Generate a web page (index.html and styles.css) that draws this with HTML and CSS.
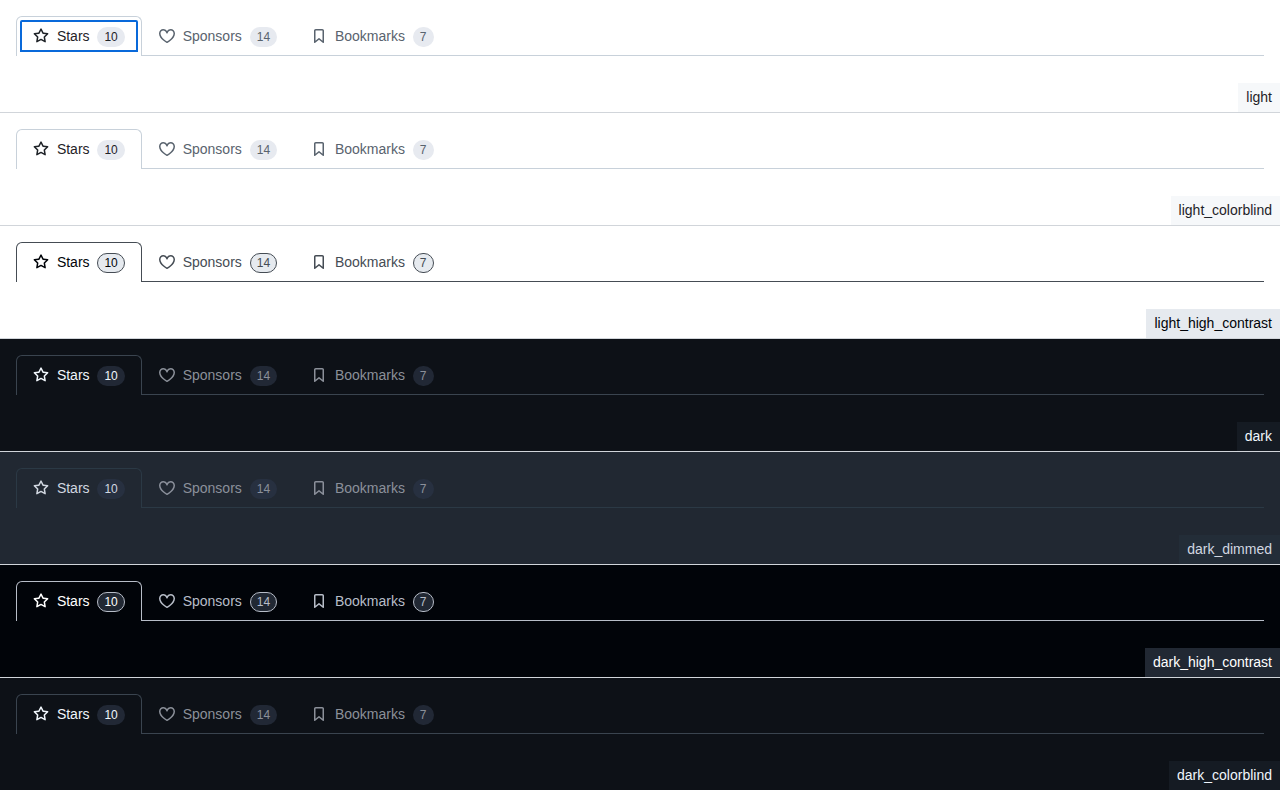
FILE: index.html
```html
<!DOCTYPE html>
<html lang="en">
<head>
<meta charset="utf-8">
<title>TabNav themes</title>
<link rel="stylesheet" href="styles.css">
</head>
<body>
<script src="script.js"></script>
</body>
</html>
```

FILE: styles.css
```css
* { box-sizing: border-box; }
body {
  margin: 0;
  font-family: "Liberation Sans", Arial, sans-serif;
  font-size: 14px;
  line-height: 21px;
  height: 790px;
  overflow: hidden;
}
.theme {
  --counter-border: transparent;
  display: flex;
  flex-direction: column;
  justify-content: space-between;
  height: 113px;
  padding-top: 16px;
  border-bottom: 1px solid #d1d5da;
  background: var(--bg);
  color: var(--fg);
}
.tabnav {
  height: 40px;
  margin: 0 16px;
  border-bottom: 1px solid var(--border);
}
.tabs { display: flex; height: 40px; }
.tab {
  display: flex;
  align-items: center;
  height: 40px;
  padding: 0 16px;
  border: 1px solid transparent;
  border-bottom: 0;
  color: var(--muted);
  line-height: 23px;
}
.tab.selected {
  color: var(--fg);
  background: var(--bg);
  border-color: var(--border);
  border-radius: 6px 6px 0 0;
}
.tab.focused { outline: 2px solid #0969da; outline-offset: -6px; }
.icon { fill: currentColor; margin: 0 7.89px 1px 0; }
.counter {
  height: 20px;
  margin: 1px 0 0 7.89px;
  padding: 0 6px;
  border: 1px solid var(--counter-border);
  border-radius: 24px;
  background: var(--counter);
  font-size: 12px;
  line-height: 18px;
}
.name {
  align-self: flex-end;
  height: 29px;
  padding: 4px 8px;
  background: var(--label);
}
.light { --bg: #fff; --fg: #1f2328; --muted: #59636e; --border: #c8d1da; --counter: #e7eaf0; --label: #f6f8fa; }
.light_high_contrast { --bg: #fff; --fg: #010409; --muted: #454c54; --border: #454c54; --counter: #e6eaef; --counter-border: #454c54; --label: #e6eaef; }
.dark { --bg: #0d1117; --fg: #f0f6fc; --muted: #8b9099; --border: #3a444f; --counter: #212835; --label: #151b23; }
.dark_dimmed { --bg: #212832; --fg: #d1d7e0; --muted: #8b909b; --border: #2b3945; --counter: #273040; --label: #232d38; }
.dark_high_contrast { --bg: #010409; --fg: #fff; --muted: #b7bdc8; --border: #b7bdc8; --counter: #212833; --counter-border: #b7bdc8; --label: #212833; }
```

FILE: script.js
```js
const icons = {
  star: 'M8 .25a.75.75 0 0 1 .673.418l1.882 3.815 4.21.612a.75.75 0 0 1 .416 1.279l-3.046 2.97.719 4.192a.751.751 0 0 1-1.088.791L8 12.347l-3.766 1.98a.75.75 0 0 1-1.088-.79l.72-4.194L.818 6.374a.75.75 0 0 1 .416-1.28l4.21-.611L7.327.668A.75.75 0 0 1 8 .25Zm0 2.445L6.615 5.5a.75.75 0 0 1-.564.41l-3.097.45 2.24 2.184a.75.75 0 0 1 .216.664l-.528 3.084 2.769-1.456a.75.75 0 0 1 .698 0l2.77 1.456-.53-3.084a.75.75 0 0 1 .216-.664l2.24-2.183-3.096-.45a.75.75 0 0 1-.564-.41L8 2.694Z',
  heart: 'm8 14.25.345.666a.75.75 0 0 1-.69 0l-.008-.004-.018-.01a7.152 7.152 0 0 1-.31-.17 22.055 22.055 0 0 1-3.434-2.414C2.045 10.731 0 8.35 0 5.5 0 2.836 2.086 1 4.25 1 5.797 1 7.153 1.802 8 3.02 8.847 1.802 10.203 1 11.75 1 13.914 1 16 2.836 16 5.5c0 2.85-2.045 5.231-3.885 6.818a22.066 22.066 0 0 1-3.744 2.584l-.018.01-.006.003h-.002ZM4.25 2.5c-1.336 0-2.75 1.164-2.75 3 0 2.15 1.58 4.144 3.365 5.682A20.58 20.58 0 0 0 8 13.393a20.58 20.58 0 0 0 3.135-2.211C12.92 9.644 14.5 7.65 14.5 5.5c0-1.836-1.414-3-2.75-3-1.373 0-2.609.986-3.029 2.456a.749.749 0 0 1-1.442 0C6.859 3.486 5.623 2.5 4.25 2.5Z',
  bookmark: 'M3 2.75C3 1.784 3.784 1 4.75 1h6.5c.966 0 1.75.784 1.75 1.75v11.5a.75.75 0 0 1-1.227.579L8 11.722l-3.773 3.107A.751.751 0 0 1 3 14.25Zm1.75-.25a.25.25 0 0 0-.25.25v9.91l3.023-2.489a.75.75 0 0 1 .954 0l3.023 2.49V2.75a.25.25 0 0 0-.25-.25Z'
};
const tabs = [['star', 'Stars', 10], ['heart', 'Sponsors', 14], ['bookmark', 'Bookmarks', 7]];
const themes = [
  ['light', 'light'], ['light_colorblind', 'light'], ['light_high_contrast', 'light_high_contrast'],
  ['dark', 'dark'], ['dark_dimmed', 'dark_dimmed'], ['dark_high_contrast', 'dark_high_contrast'],
  ['dark_colorblind', 'dark']
];
document.body.innerHTML = themes.map(([name, palette], row) => `
  <section class="theme ${palette}">
    <nav class="tabnav"><div class="tabs">${tabs.map(([icon, text, count], i) => `
      <a class="tab${i ? '' : ' selected'}${row || i ? '' : ' focused'}"><svg class="icon" width="16" height="16" viewBox="0 0 16 16"><path d="${icons[icon]}"/></svg><span>${text}</span><span class="counter">${count}</span></a>`).join('')}
    </div></nav>
    <div class="name">${name}</div>
  </section>`).join('');
```
